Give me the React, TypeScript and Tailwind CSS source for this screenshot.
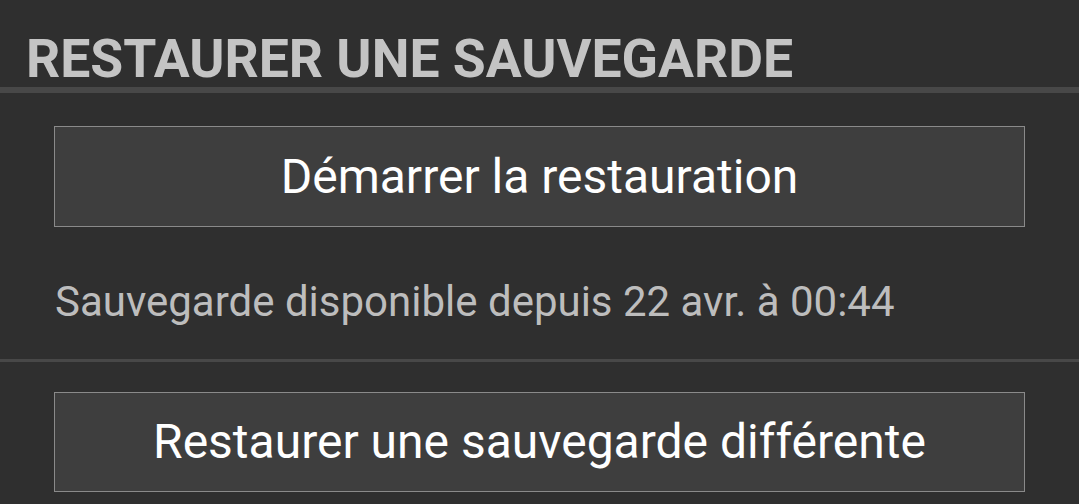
export default function App() {
  const font = { fontFamily: "Roboto, 'Noto Sans', sans-serif" };

  return (
    <div
      className="w-[1079px] h-[504px] overflow-hidden bg-[#2f2f2f] flex flex-col"
      style={font}
    >
      {/* Section title */}
      <div className="pt-[32px] pl-[26px] text-[53.5px] leading-[53px] font-bold text-[#c4c4c4]">
        RESTAURER UNE SAUVEGARDE
      </div>
      <div className="mt-[2px] h-[6px] w-full bg-[#484848]" />

      {/* Restore button */}
      <div className="px-[54px] mt-[33px]">
        <button className="w-full h-[101px] bg-[#3e3e3e] border border-[#8a8a8a] flex items-center justify-center text-[48px] text-white">
          Démarrer la restauration
        </button>
      </div>

      {/* Backup info */}
      <div className="px-[55px] mt-[51px] text-[42px] leading-[48px] text-[#bdbdbd]">
        Sauvegarde disponible depuis 22 avr. à 00:44
      </div>

      <div className="mt-[33px] h-[3px] w-full bg-[#484848]" />

      {/* Other backup */}
      <div className="px-[54px] mt-[30px]">
        <button className="w-full h-[100px] bg-[#3e3e3e] border border-[#8a8a8a] flex items-center justify-center text-[48px] text-white">
          Restaurer une sauvegarde différente
        </button>
      </div>
    </div>
  );
}
